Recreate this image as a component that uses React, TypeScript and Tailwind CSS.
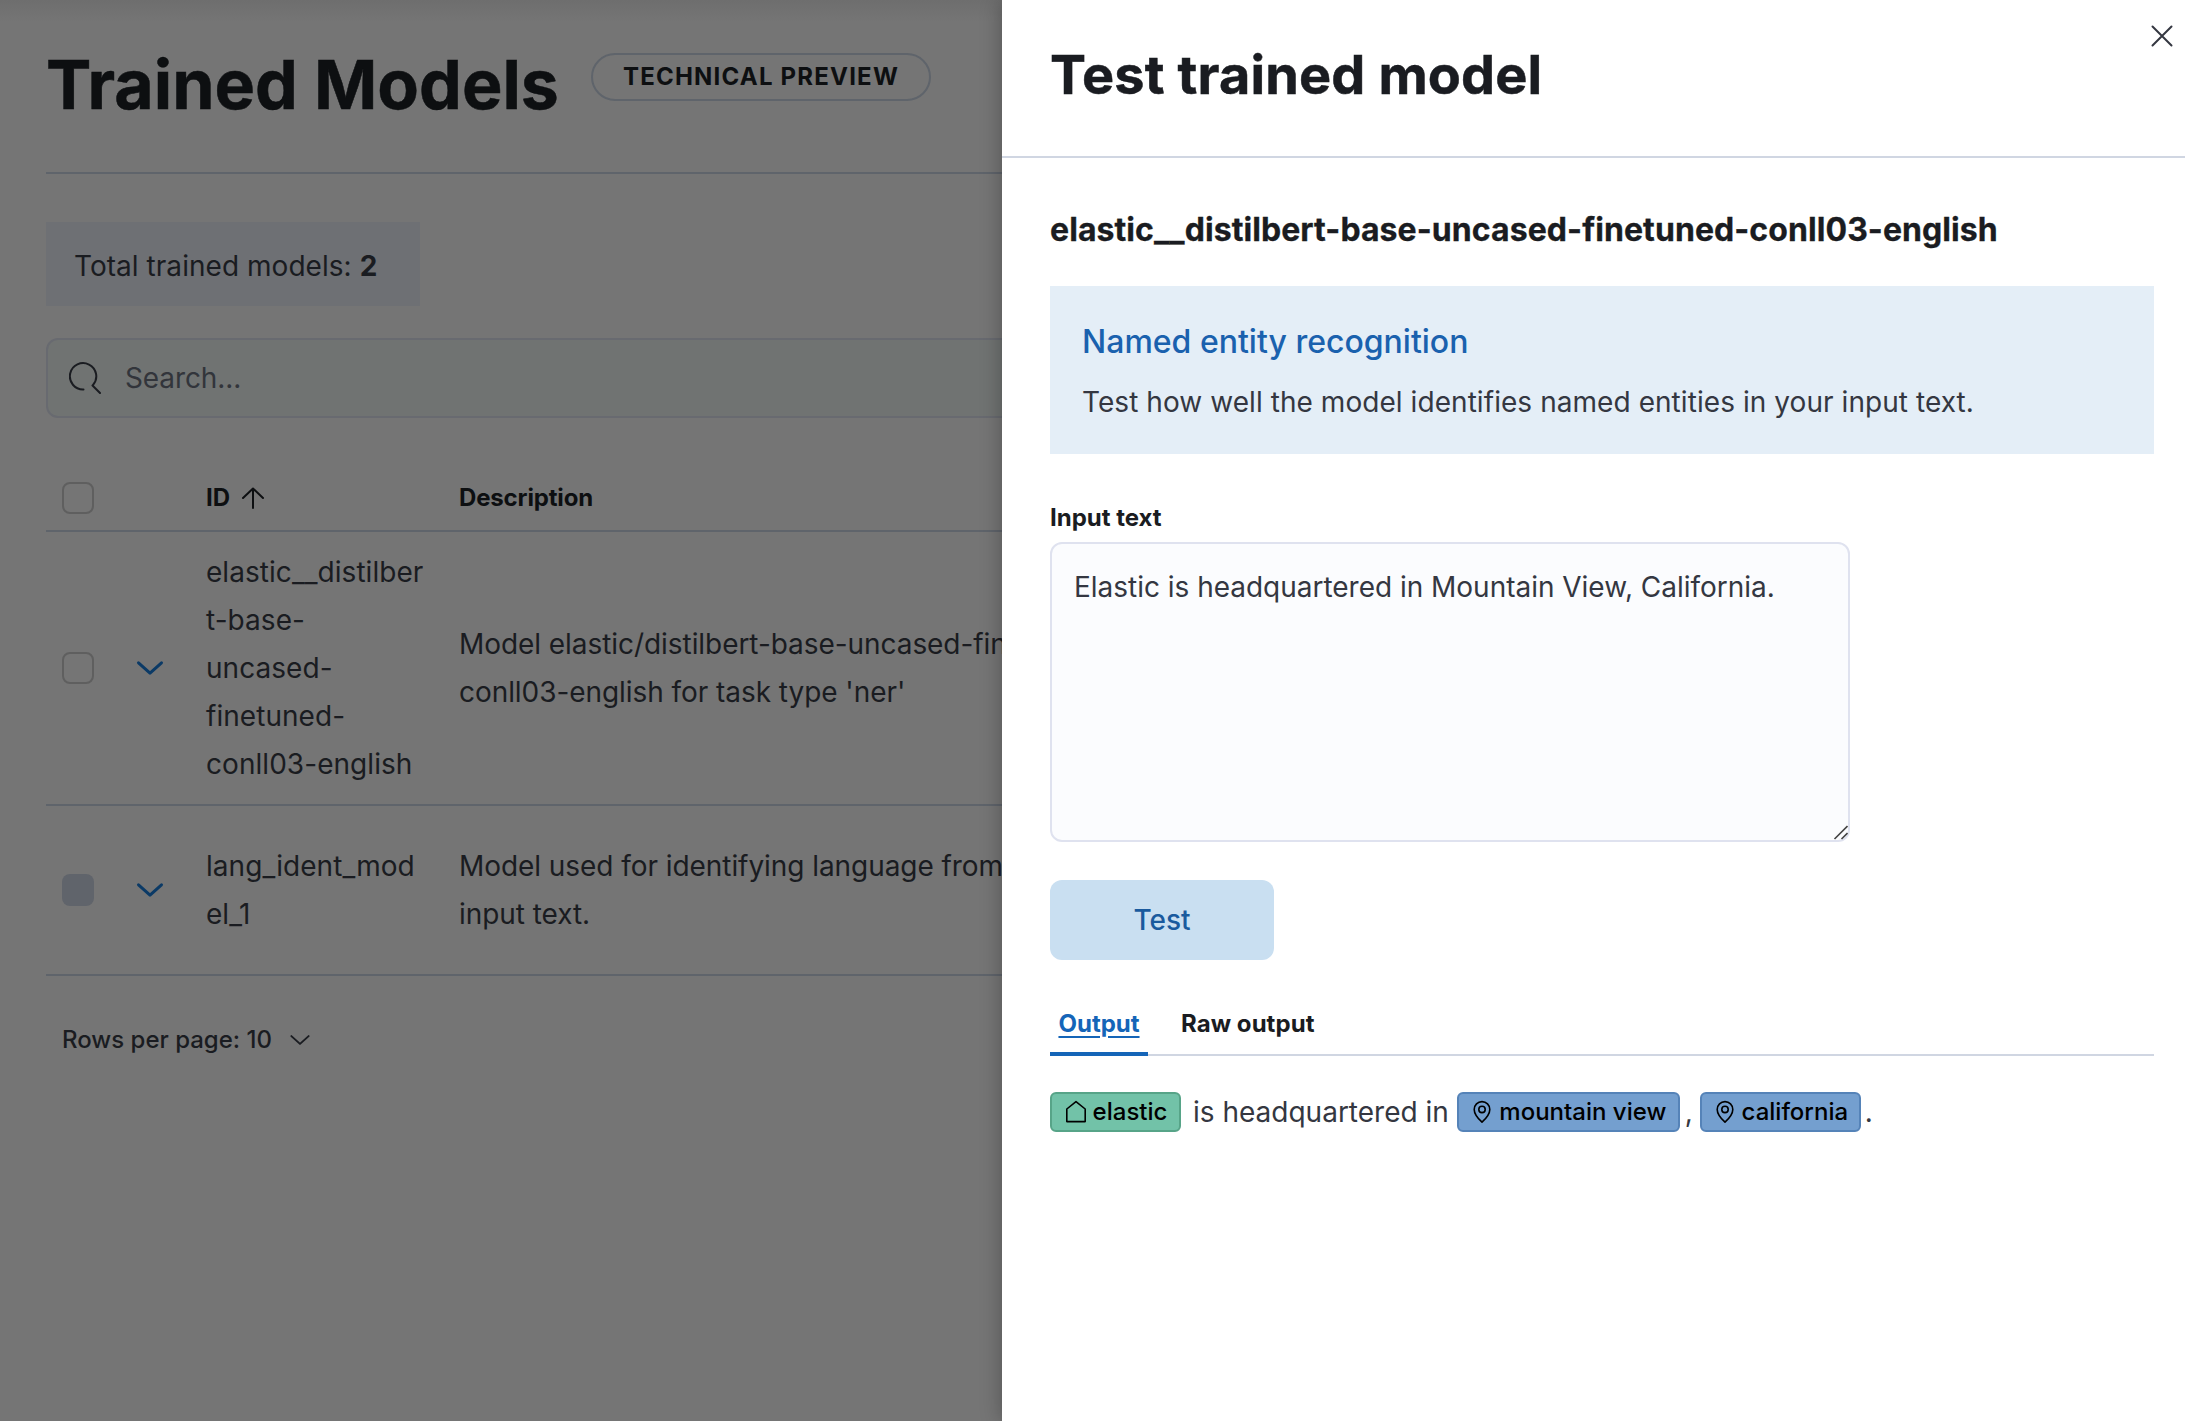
import React from "react";

const Chevron = ({ className, sw }: { className: string; sw: number }) => (
  <svg className={className} viewBox="0 0 32 32" fill="none" stroke="currentColor" strokeWidth={sw} strokeLinecap="round" strokeLinejoin="round">
    <path d="M4.5 10.8 L16 21.2 L27.5 10.8" />
  </svg>
);

const Pin = () => (
  <svg className="h-6 w-6 shrink-0" viewBox="0 0 24 24" fill="none" stroke="currentColor" strokeWidth="1.6" strokeLinejoin="round">
    <path d="M12 22.2 C9.2 19.6 4.2 14.6 4.2 9.4 A7.8 7.8 0 0 1 19.8 9.4 C19.8 14.6 14.8 19.6 12 22.2 Z" />
    <circle cx="12" cy="9.4" r="3.2" />
  </svg>
);

const House = () => (
  <svg className="h-6 w-6 shrink-0" viewBox="0 0 24 24" fill="none" stroke="currentColor" strokeWidth="1.6" strokeLinejoin="round">
    <path d="M2.8 9 L12 1.6 L21.2 9 V21.6 H2.8 Z" />
  </svg>
);

const Checkbox = ({ disabled }: { disabled?: boolean }) =>
  disabled ? (
    <div className="ml-4 h-8 w-8 rounded-lg bg-[#60646b]" />
  ) : (
    <div className="ml-4 h-8 w-8 rounded-lg border-2 border-[#5f5f5f]" />
  );

const rows = [
  {
    id: ["elastic__distilber", "t-base-", "uncased-", "finetuned-", "conll03-english"],
    desc: ["Model elastic/distilbert-base-uncased-finetuned-", "conll03-english for task type 'ner'"],
    height: "h-[274px]",
    disabled: false,
  },
  {
    id: ["lang_ident_mod", "el_1"],
    desc: ["Model used for identifying language from", "input text."],
    height: "h-[170px]",
    disabled: true,
  },
];

function ModelsPage() {
  return (
    <main className="h-full w-[1002px] shrink-0 overflow-hidden whitespace-nowrap bg-[#757575] bg-[linear-gradient(#6e6e6e,#757575_22px)] pl-[46px] text-[28px] text-[#1a1c21]">
      <header className="flex h-[174px] items-start border-b-2 border-[#5f646b] text-[#0d0f11]">
        <h1 className="mt-[43px] w-[545px] text-[68px] font-bold leading-[82px] [-webkit-text-stroke:0.5px]">Trained Models</h1>
        <span className="mt-[53px] flex h-12 w-[340px] items-center justify-center rounded-full border-2 border-[#5f646b] text-[24px] font-bold tracking-[1.2px]">
          TECHNICAL PREVIEW
        </span>
      </header>
      <div className="mt-12 flex h-[84px] w-[374px] items-center bg-[#6e7074] pl-7 pt-1">
        <span className="tracking-[0.04px]">
          Total trained models: <b>2</b>
        </span>
      </div>
      <div className="mt-8 flex h-20 w-[1100px] items-center rounded-xl border-2 border-[#686a70] bg-[#707372] pl-[21px] text-[#32353b]">
        <svg className="h-8 w-8 text-[#1a1c21]" viewBox="0 0 32 32" fill="none" stroke="currentColor" strokeWidth="2" strokeLinecap="round">
          <path d="M14.5 27.5 A13.2 13.2 0 1 1 24 23 M23.5 23.5 L31 31" />
        </svg>
        <span className="ml-6 tracking-[-0.1px]">Search...</span>
      </div>
      <div className="mt-8 flex h-[82px] w-[1100px] items-center border-b-2 border-[#5f646b] pt-[16px] text-[24px] font-bold text-[#0d0f11]">
        <div className="w-[160px]">
          <Checkbox />
        </div>
        <div className="flex w-[253px] items-center">
          ID
          <svg className="ml-[11px] h-6 w-6" viewBox="0 0 24 24" fill="none" stroke="currentColor" strokeWidth="2" strokeLinecap="round" strokeLinejoin="round">
            <path d="M12 22 V2.5 M2 12 L12 2.5 L22 12" />
          </svg>
        </div>
        <div className="tracking-[-0.15px]">Description</div>
      </div>
      {rows.map((r) => (
        <div key={r.id[0]} className={"flex w-[1100px] items-center border-b-2 border-[#5f646b] leading-[48px] " + r.height}>
          <div className="w-[88px]">
            <Checkbox disabled={r.disabled} />
          </div>
          <div className="w-[72px] text-[#0b3a66]">
            <Chevron className="h-8 w-8" sw={3} />
          </div>
          <div className="w-[253px] tracking-[0.05px]">
            {r.id.map((t) => (
              <div key={t}>{t}</div>
            ))}
          </div>
          <div className="tracking-[-0.06px]">
            {r.desc.map((t) => (
              <div key={t}>{t}</div>
            ))}
          </div>
        </div>
      ))}
      <div className="mt-10 flex h-12 items-center pl-4 text-[24px] font-medium">
        Rows per page: 10
        <Chevron className="ml-4 h-6 w-6" sw={2.6} />
      </div>
    </main>
  );
}

function Badge({ icon, children, className }: { icon: React.ReactNode; children: string; className: string }) {
  return (
    <span className={"flex h-10 items-center justify-center gap-[5px] rounded-md border-2 pb-px text-[24px] font-medium text-black " + className}>
      {icon}
      {children}
    </span>
  );
}

function Flyout() {
  return (
    <aside className="relative h-full grow bg-white text-[28px] text-[#343741] shadow-[0_0_20px_rgba(0,0,0,0.3)]">
      <header className="flex h-[158px] items-start border-b-2 border-[#d0d6e2] pl-12">
        <h2 className="mt-[43px] text-[54px] font-bold leading-[64px] tracking-[0.15px] text-[#1a1c21] [-webkit-text-stroke:0.5px]">Test trained model</h2>
        <svg className="absolute left-[1149px] top-[25px] h-[22px] w-[22px]" viewBox="0 0 22 22" stroke="#343741" strokeWidth="2" strokeLinecap="round">
          <path d="M1.5 1.5 L20.5 20.5 M20.5 1.5 L1.5 20.5" />
        </svg>
      </header>
      <div className="w-[1152px] pl-12">
        <h3 className="pt-12 text-[32px] font-bold leading-[48px] tracking-[0.08px] text-[#1a1c21] [-webkit-text-stroke:0.3px]">elastic__distilbert-base-uncased-finetuned-conll03-english</h3>
        <section className="mt-8 h-[168px] bg-[#e4eef7] pl-8 pt-8">
          <div className="text-[32px] font-medium leading-[48px] text-[#1a61ae]">Named entity recognition</div>
          <p className="mt-3 leading-[48px] tracking-[0.06px]">Test how well the model identifies named entities in your input text.</p>
        </section>
        <div className="mt-[46px] text-[24px] font-bold leading-9 text-[#1a1c21]">Input text</div>
        <div className="relative mt-[6px] h-[300px] w-[800px] rounded-xl border-2 border-[#dfe2ef] bg-[#fbfcfe] pl-[22px] pt-[19px] leading-[48px] tracking-[-0.02px]">
          Elastic is headquartered in Mountain View, California.
          <svg className="absolute bottom-0 right-0 h-4 w-4" viewBox="0 0 16 16" stroke="#444" strokeWidth="1.6">
            <path d="M2.5 15 L15.5 2 M9.5 15 L15.5 9" />
          </svg>
        </div>
        <button className="mt-[38px] block h-20 w-[224px] rounded-xl bg-[#c9dff1] font-medium text-[#1a5a9e]">Test</button>
        <nav className="mt-8 flex h-16 border-b-2 border-[#d0d6e2] text-[24px] font-bold leading-[64px]">
          <span className="h-16 w-[98px] border-b-4 border-[#1565b8] text-center text-[#1565b8] underline decoration-2 underline-offset-[4px]">Output</span>
          <span className="ml-[33px] tracking-[0.05px] text-[#1a1c21]">Raw output</span>
        </nav>
        <div className="mt-[35px] flex items-center whitespace-pre">
          <Badge icon={<House />} className="w-[131px] border-[#57a488] bg-[#72c2a8]">elastic</Badge>
          <span className="ml-3">is headquartered in</span>
          <Badge icon={<Pin />} className="ml-2 w-[223px] border-[#5583b8] bg-[#749fcf]">mountain view</Badge>
          <span className="ml-[5px] w-[15px]">,</span>
          <Badge icon={<Pin />} className="w-[161px] border-[#5583b8] bg-[#749fcf]">california</Badge>
          <span className="ml-1">.</span>
        </div>
      </div>
    </aside>
  );
}

export default function App() {
  return (
    <div className="flex h-[1421px] w-[2185px] overflow-hidden font-['Inter',sans-serif]">
      <ModelsPage />
      <Flyout />
    </div>
  );
}
